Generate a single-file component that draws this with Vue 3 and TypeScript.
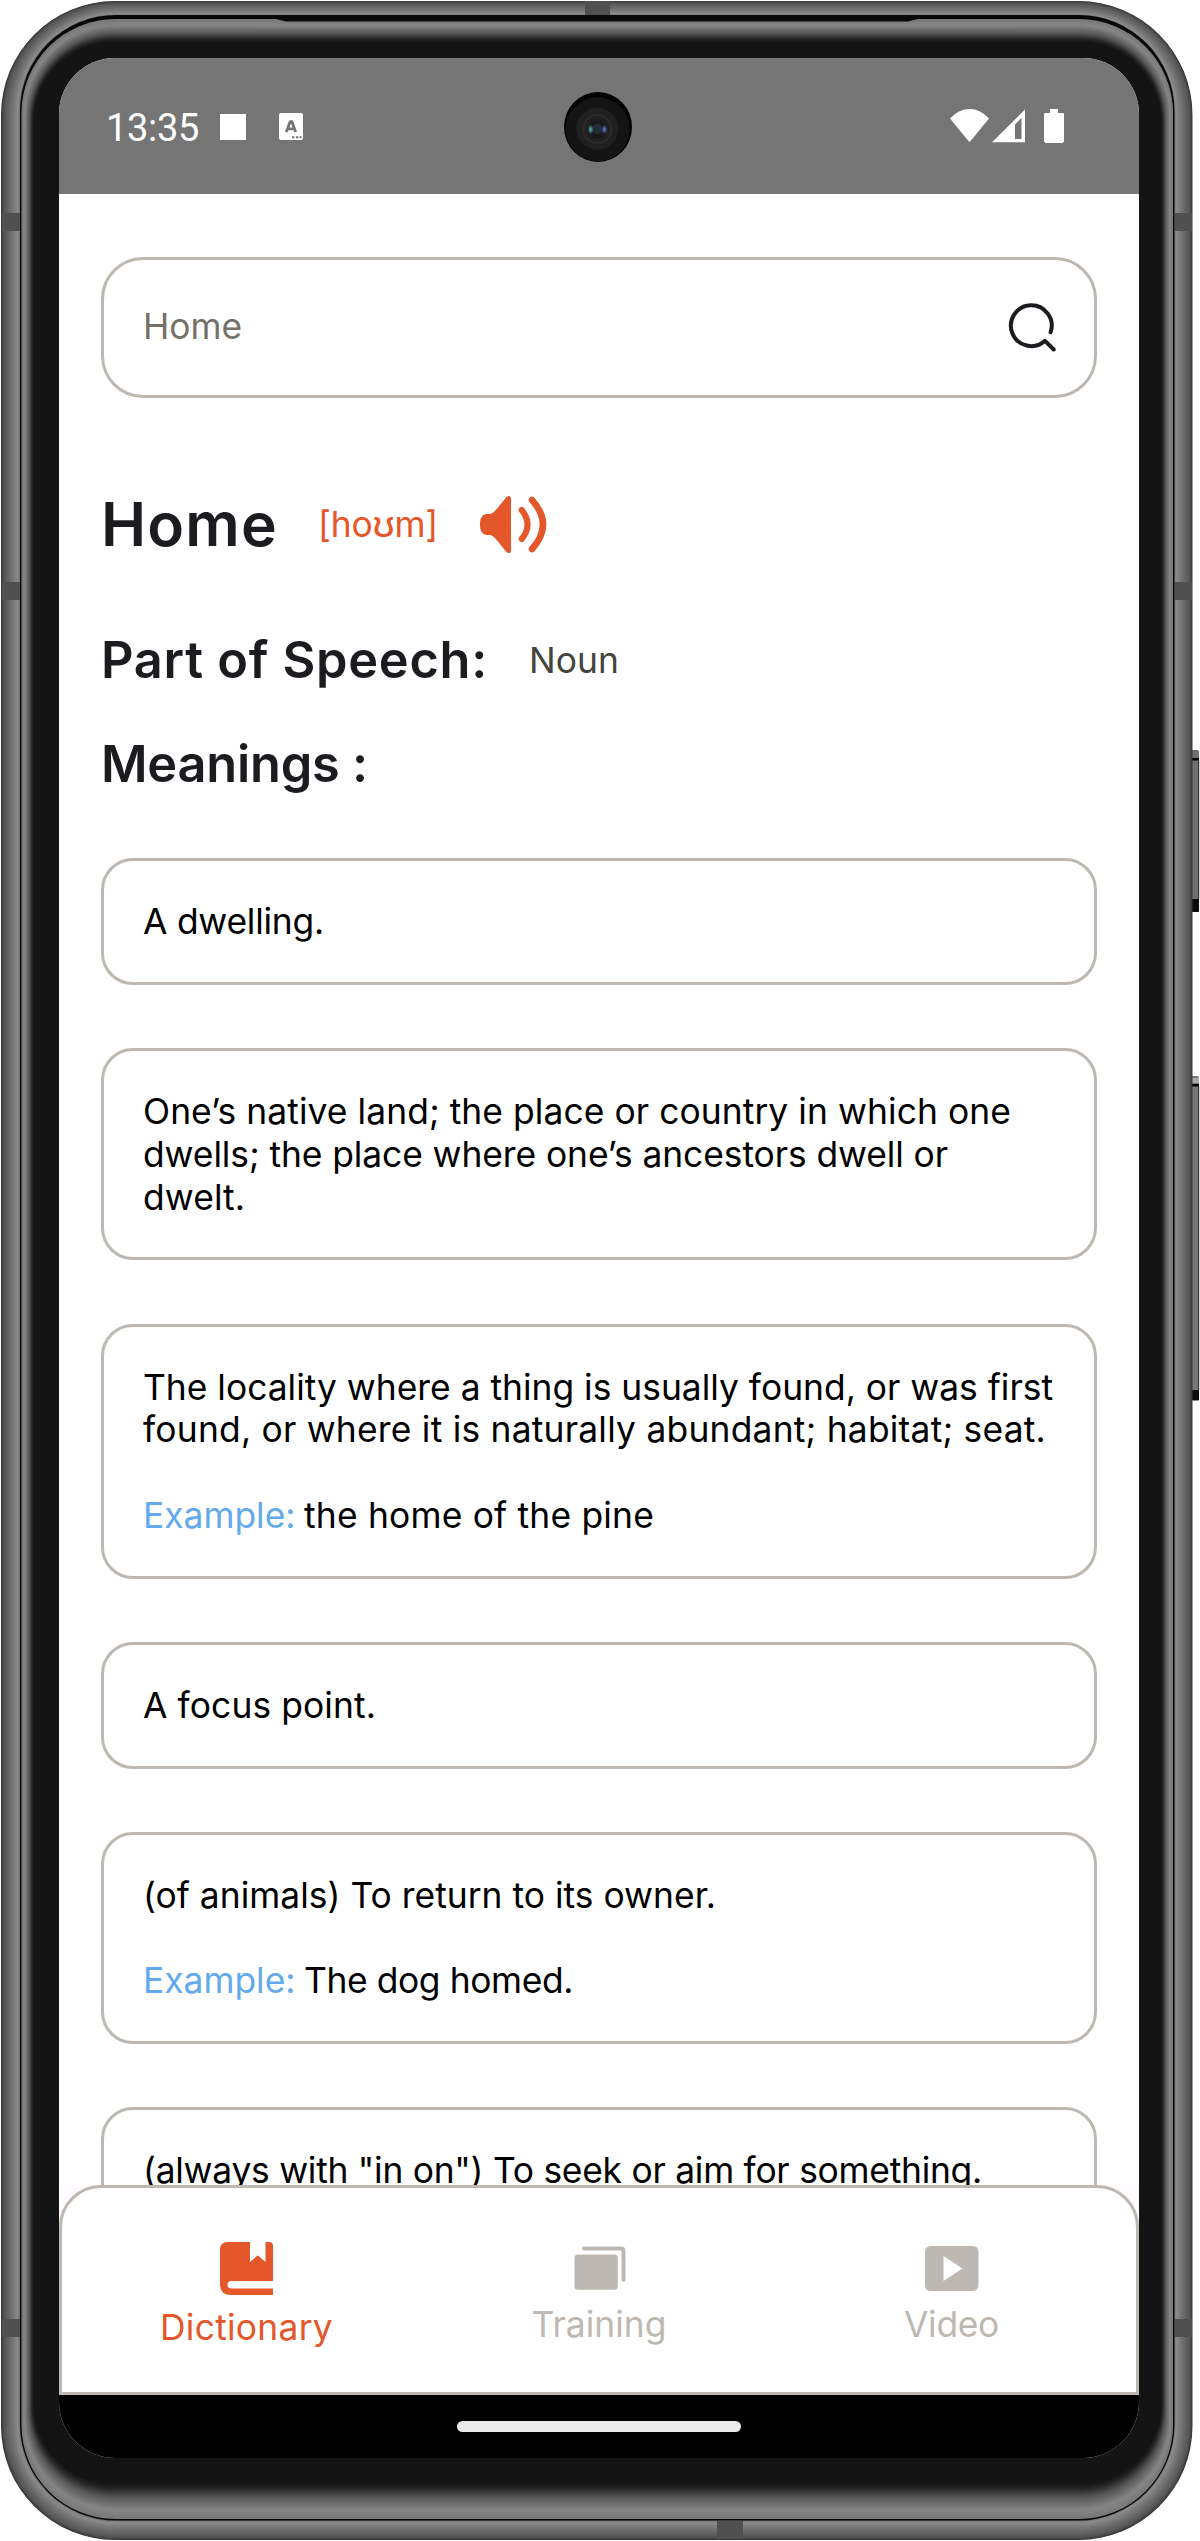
<script setup lang="ts">
import type { Directive } from 'vue'

interface Line { text: string; width: number }
interface Meaning { lines: Line[]; example?: Line }
interface Ring { x: number; y: number; w: number; h: number; r: number; fill: string }

/* Spreads the letters of a line so that it fills the given width. */
const vFit: Directive<HTMLElement, number> = {
  mounted(el, binding) {
    const natural = el.getBoundingClientRect().width
    const count = (el.textContent ?? '').length
    el.style.letterSpacing = `${(binding.value - natural) / count}px`
  },
}

const meanings: Meaning[] = [
  { lines: [{ text: 'A dwelling.', width: 181 }] },
  {
    lines: [
      { text: 'One’s native land; the place or country in which one', width: 868 },
      { text: 'dwells; the place where one’s ancestors dwell or', width: 805 },
      { text: 'dwelt.', width: 102 },
    ],
  },
  {
    lines: [
      { text: 'The locality where a thing is usually found, or was first', width: 910 },
      { text: 'found, or where it is naturally abundant; habitat; seat.', width: 903 },
    ],
    example: { text: 'the home of the pine', width: 350 },
  },
  { lines: [{ text: 'A focus point.', width: 233 }] },
  {
    lines: [{ text: '(of animals) To return to its owner.', width: 573 }],
    example: { text: 'The dog homed.', width: 269 },
  },
  { lines: [{ text: '(always with "in on") To seek or aim for something.', width: 839 }] },
]

type Box = [number, number, number, number, number]

/* Colour ramp drawn as concentric rounded rectangles, from an outer to an inner box. */
function ramp(from: Box, to: Box, stops: [number, number][], steps: number): Ring[] {
  const rings: Ring[] = []
  for (let i = 0; i <= steps; i++) {
    const t = i / steps
    const [l, tp, r, b, rad] = from.map((v, k) => v + (to[k] - v) * t)
    let n = 1
    while (n < stops.length - 1 && stops[n][0] < t) n++
    const [t0, c0] = stops[n - 1]
    const [t1, c1] = stops[n]
    const c = Math.round(c0 + ((c1 - c0) * (t - t0)) / (t1 - t0))
    rings.push({ x: l, y: tp, w: r - l, h: b - tp, r: rad, fill: `rgb(${c},${c},${c})` })
  }
  return rings
}

const metal = ramp([1, 1, 1192.5, 2540, 114], [19.5, 15, 1174.5, 2521, 97],
  [[0, 0x38], [0.15, 0x55], [0.6, 0x74], [0.9, 0x8c], [1, 0x70]], 28)
const glass = ramp([21.5, 19, 1173, 2519, 94], [34, 42, 1161, 2484, 80],
  [[0, 0x78], [0.25, 0x86], [0.6, 0x58], [0.85, 0x26], [1, 0x14]], 36)
const bands = [213, 582, 2319]
</script>

<template>
  <div class="phone">
    <svg class="frame" width="1200" height="2541" viewBox="0 0 1200 2541">
      <g>
        <rect x="1190" y="750" width="9" height="162" rx="2" fill="#6f6f6f" />
        <rect x="1192" y="758" width="7" height="2.500" fill="#050505" />
        <rect x="1192" y="899" width="7" height="13" rx="1" fill="#0c0c0c" />
        <rect x="1198" y="760" width="1.2" height="139" fill="#333" />
        <rect x="1190" y="1076" width="9" height="324" rx="2" fill="#777" />
        <rect x="1192" y="1078" width="7" height="5" fill="#aaa" />
        <rect x="1192" y="1084" width="7" height="2.500" fill="#050505" />
        <rect x="1192" y="1390" width="7" height="10.500" rx="1" fill="#0c0c0c" />
        <rect x="1198" y="1086" width="1.2" height="304" fill="#333" />
      </g>
      <rect v-for="(m, i) in metal" :key="'m' + i" :x="m.x" :y="m.y" :width="m.w" :height="m.h" :rx="m.r" :fill="m.fill" />
      <g fill="#505050">
        <template v-for="y in bands" :key="y">
          <rect x="2" :y="y" width="18" height="18" />
          <rect x="1175" :y="y" width="17" height="18" />
        </template>
        <rect x="585" y="1" width="25" height="15" />
        <rect x="717" y="2521" width="26" height="18" />
      </g>
      <rect x="20" y="15" width="1154.5" height="2505.5" rx="96" fill="#080808" />
      <rect v-for="(g, i) in glass" :key="'g' + i" :x="g.x" :y="g.y" :width="g.w" :height="g.h" :rx="g.r" :fill="g.fill" />
      <path d="M272 18H922L908 21.5H286Z" fill="#080808" />
    </svg>

    <div class="screen">
      <header class="status">
        <span class="clock"><span v-fit="93">13:35</span></span>
        <svg class="square" width="26" height="26"><rect width="26" height="26" fill="#fff" /></svg>
        <svg class="keyboard" width="24" height="27" viewBox="0 0 24 27">
          <rect width="24" height="27" rx="2" fill="#fff" />
          <path d="M7.3 19L11.2 8.6H12.8L16.7 19M9 15.8H15" fill="none" stroke="#757575" stroke-width="2.8" stroke-linejoin="round" />
          <path d="M13 23.2h2.4v2H13zM17 23.2h2.4v2H17zM20.6 23.2h2v2h-2z" fill="#757575" />
        </svg>
        <svg class="camera" width="70" height="72" viewBox="0 0 70 72">
          <defs>
            <radialGradient id="teal"><stop offset="0" stop-color="#5fb8b4" /><stop offset="1" stop-color="#5fb8b4" stop-opacity="0" /></radialGradient>
            <radialGradient id="blue"><stop offset="0" stop-color="#6482dc" /><stop offset="1" stop-color="#6482dc" stop-opacity="0" /></radialGradient>
          </defs>
          <ellipse cx="35" cy="36" rx="34" ry="35" fill="#000" />
          <circle cx="34.6" cy="38.3" r="32" fill="#141414" />
          <circle cx="34.3" cy="37.8" r="21" fill="#202020" />
          <circle cx="34.3" cy="38" r="15" fill="#2b2b2b" />
          <circle cx="34.3" cy="38" r="13" fill="#202020" />
          <circle cx="34.3" cy="38" r="9.5" fill="#17191c" />
          <circle cx="34.3" cy="38" r="5" fill="#252c36" />
          <ellipse cx="27.6" cy="38.4" rx="3" ry="5" fill="url(#teal)" />
          <ellipse cx="41.4" cy="38.4" rx="3" ry="5" fill="url(#blue)" />
        </svg>
        <svg class="signals" width="115" height="35" viewBox="0 0 115 35">
          <path d="M0 9.5Q8.5 0 19.5 0T39 9.5L19.5 33.3Z" fill="#fff" />
          <path d="M42 33.3L75 0.5V33.3Z" fill="#fff" />
          <path d="M65 15.5L71.5 8.7V30H65Z" fill="#757575" />
          <path d="M100 0h8v4h5q1 0 1 1V33h-1v1H95v-1h-1V5q0-1 1-1h5z" fill="#fff" />
        </svg>
      </header>

      <main class="content">
        <div class="search">
          <span v-fit="99">Home</span>
          <svg width="46" height="46" viewBox="0 0 46 46" fill="none" stroke="#1c1b1f" stroke-width="4" stroke-linecap="round" stroke-linejoin="round">
            <path d="M42.6 28.3A20.4 20.4 0 1 0 37 36.8L45.700 45.500" />
          </svg>
        </div>

        <div class="title">
          <h1><span v-fit="177">Home</span></h1>
          <span class="phonetic"><span v-fit="120">[hoʊm]</span></span>
          <svg width="67" height="59" viewBox="0 0 67 59" fill="none" stroke="#e4572a" stroke-linecap="round">
            <path d="M7 19H10C14 18 16 15 26 2.5C28 0 31 0.5 31 3.5V55.500C31 58.500 28 59 26 56.500C16 44 14 41 10 40H7C2.500 40 0 36 0 29.500S2.500 19 7 19Z" fill="#e4572a" stroke="none" />
            <path d="M41.700 15Q53.500 29.500 41.700 44" stroke-width="6" />
            <path d="M52 5Q74 29.500 52 54" stroke-width="6.500" />
          </svg>
        </div>

        <div class="speech">
          <h2><span v-fit="387">Part of Speech:</span></h2>
          <span class="noun"><span v-fit="90">Noun</span></span>
        </div>
        <h2 class="heading"><span v-fit="267">Meanings :</span></h2>

        <section class="cards">
          <article v-for="(m, i) in meanings" :key="i" class="card">
            <p v-for="l in m.lines" :key="l.text"><span v-fit="l.width">{{ l.text }}</span></p>
            <p v-if="m.example" class="example">
              <span v-fit="152.5" class="tag">Example:</span><span v-fit="m.example.width">{{ m.example.text }}</span>
            </p>
          </article>
        </section>
      </main>

      <nav class="tabs">
        <div class="tab active">
          <svg width="53" height="53" viewBox="0 0 53 53">
            <path d="M8 0H30V20L37.700 13.300L45.500 20V0H49Q53 0 53 4V39H11.500Q7.500 39 7.500 42.700T11.500 46.400H53V53H11Q0 53 0 42V8Q0 0 8 0Z" fill="#e4572a" />
          </svg>
          <span class="label"><span v-fit="173">Dictionary</span></span>
        </div>
        <div class="tab">
          <svg width="53" height="53" viewBox="0 0 53 53">
            <rect x="1.500" y="12.500" width="43.300" height="35.300" rx="3.500" fill="#bdb8b1" />
            <path d="M11 6.600H48Q50.500 6.600 50.500 9V37.800" fill="none" stroke="#bdb8b1" stroke-width="4" stroke-linecap="round" />
          </svg>
          <span class="label"><span v-fit="135">Training</span></span>
        </div>
        <div class="tab">
          <svg width="54" height="53" viewBox="0 0 54 53">
            <path d="M6 4H47.500Q53.500 4 53.500 10V43Q53.500 49 47.500 49H6Q0 49 0 43V10Q0 4 6 4ZM18.500 14V39L37.500 26.500Z" fill="#bdb8b1" fill-rule="evenodd" />
          </svg>
          <span class="label"><span v-fit="95">Video</span></span>
        </div>
      </nav>

      <footer class="gesture"><div class="pill"></div></footer>
    </div>
  </div>
</template>

<style>
body { margin: 0; background: #fff; }
</style>

<style scoped>
.phone { display: grid; width: 1200px; height: 2541px; overflow: hidden; font-family: Inter, "Noto Sans", sans-serif; font-size: 35.4px; line-height: 42.75px; white-space: nowrap; }
.frame { grid-area: 1 / 1; display: block; }
.screen { grid-area: 1 / 1; margin: 58px 0 0 59px; width: 1080px; height: 2400px; border-radius: 56px; overflow: hidden; background: #fffbfe; display: flex; flex-direction: column; }
svg { display: block; flex: none; }
h1, h2, p { margin: 0; }
span { display: inline-block; }

.status { height: 136px; flex: none; background: #757575; display: flex; align-items: flex-start; box-sizing: border-box; }
.clock { width: 93px; margin: 47px 0 0 47px; font-family: Roboto, sans-serif; font-size: 38px; line-height: 46px; color: #fff; }
.square { margin: 56px 0 0 21px; }
.keyboard { margin: 55px 0 0 33px; }
.camera { margin: 33px 0 0 260px; }
.signals { margin: 51px 0 0 317px; }

.content { height: 1991px; flex: none; overflow: hidden; background: #fff; padding: 63px 42px 0; box-sizing: border-box; }
.search { height: 141px; box-sizing: border-box; border: 3px solid #bdb8b1; border-radius: 42px; display: flex; align-items: center; justify-content: space-between; padding: 0 40px 0 39px; color: #757068; }
.search span { margin-top: -1px; }
.search svg { overflow: visible; margin-top: -2px; }
.title { height: 76px; margin-top: 88px; display: flex; align-items: center; }
h1 { width: 176px; font-size: 60.5px; font-weight: 600; color: #1c1b1f; line-height: 76px; }
.phonetic { width: 119px; margin-left: 41px; padding-top: 2px; color: #e4572a; }
.title svg { margin-left: 43px; }
.speech { height: 64px; margin-top: 66px; display: flex; align-items: center; }
h2 { font-size: 50.5px; font-weight: 600; line-height: 64px; color: #1c1b1f; }
.speech h2 { width: 385px; }
.noun { margin-left: 43px; padding-top: 2px; color: #45433c; }
.heading { margin-top: 40px; }
.cards { display: flex; flex-direction: column; gap: 63.25px; margin-top: 62px; }
.card { box-sizing: border-box; border: 3px solid #bdb8b1; border-radius: 32px; padding: 40px 39px 38px; color: #000; }
.example { margin-top: 42.75px; display: flex; gap: 8.5px; }
.tag { color: #64a9ec; }

.tabs { height: 210px; flex: none; box-sizing: border-box; border: 3px solid #bdb8b1; border-radius: 42px 42px 0 0; background: #fff; display: flex; justify-content: center; color: #bdb8b1; }
.tab { width: 352.5px; display: flex; flex-direction: column; align-items: center; padding-top: 54px; }
.label { margin-top: 9px; }
.active { color: #e4572a; }
.active .label { margin-top: 12px; }

.gesture { height: 63px; flex: none; background: #000; display: flex; justify-content: center; padding-top: 26px; box-sizing: border-box; }
.pill { width: 284px; height: 11px; border-radius: 6px; background: #eaeaea; }
</style>
